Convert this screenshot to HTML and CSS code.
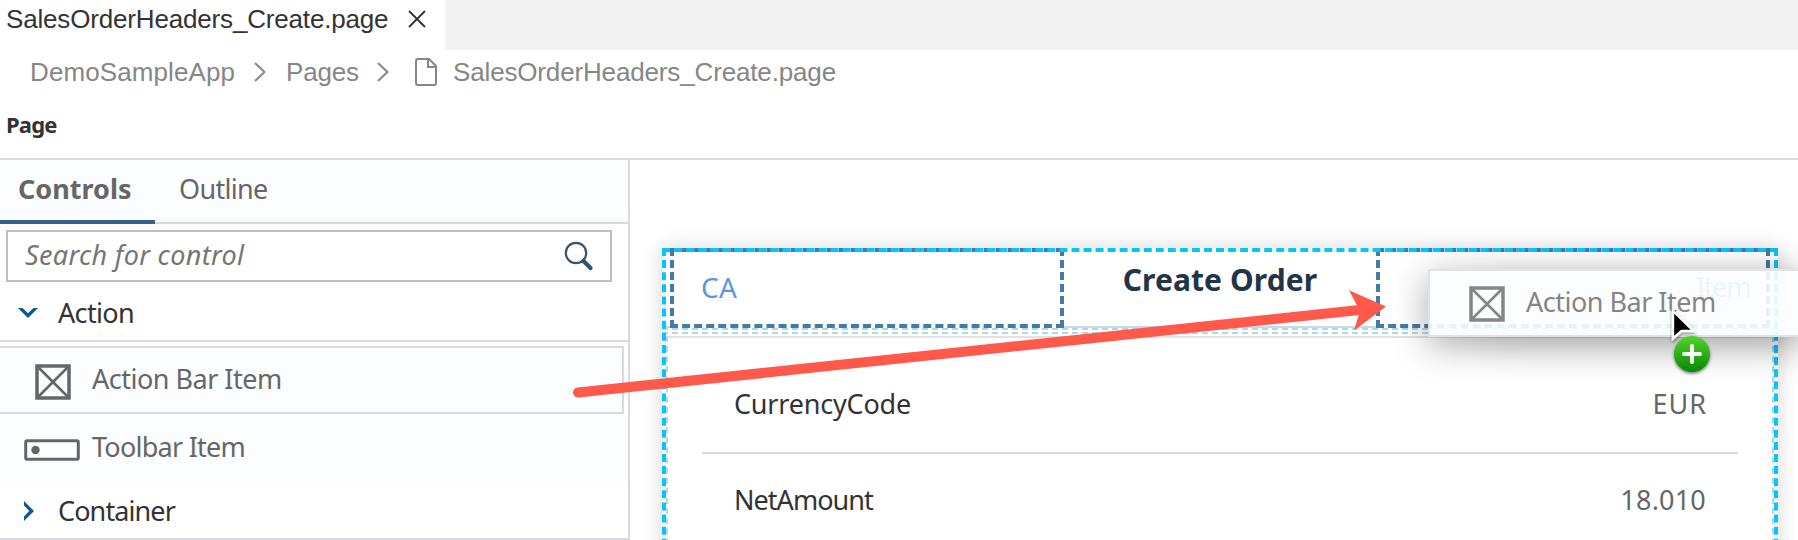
FILE: index.html
```
<!DOCTYPE html>
<html lang="en">
<head>
<meta charset="utf-8">
<title>SalesOrderHeaders_Create.page</title>
<link rel="stylesheet" href="styles.css">
</head>
<body>
<header class="tabs-bar">
  <div class="file-tab">
    <span class="file-name">SalesOrderHeaders_Create.page</span>
    <svg class="close" width="18" height="18" viewBox="0 0 18 18"><path d="M1 1 17 17M17 1 1 17"/></svg>
  </div>
</header>
<nav class="breadcrumb">
  <span class="crumb-app">DemoSampleApp</span>
  <svg class="crumb-sep" width="12" height="20" viewBox="0 0 12 20"><path d="M1 1 10.500 10 1 19"/></svg>
  <span class="crumb-pages">Pages</span>
  <svg class="crumb-sep second" width="12" height="20" viewBox="0 0 12 20"><path d="M1 1 10.500 10 1 19"/></svg>
  <svg class="file-icon" width="22" height="28" viewBox="0 0 22 28"><path d="M3 1H14L21 8V25Q21 27 19 27H3Q1 27 1 25V3Q1 1 3 1ZM13 1V9H21"/></svg>
  <span class="crumb-file">SalesOrderHeaders_Create.page</span>
</nav>
<div class="page-title">Page</div>
<main class="workspace">
  <aside class="panel">
    <div class="panel-tabs">
      <div class="panel-tab active">Controls</div>
      <div class="panel-tab">Outline</div>
    </div>
    <div class="search">
      <span class="placeholder">Search for control</span>
      <svg width="30" height="30" viewBox="0 0 30 30"><circle cx="12" cy="12" r="10.200" fill="none" stroke="#33526f" stroke-width="2.200"/><path d="M19.500 20 26.500 27" stroke="#33526f" stroke-width="4.200" stroke-linecap="round"/></svg>
    </div>
    <div class="group">
      <svg class="chev-down" width="20" height="10" viewBox="0 0 20 10"><path d="M0 0H4.500L10 5.200 15.500 0H20L10 10Z"/></svg>
      <span class="t-action">Action</span>
    </div>
    <div class="item boxed">
      <svg class="box-icon" width="36" height="36" viewBox="0 0 36 36"><path d="M2 2H34V34H2Z" stroke-width="3.500"/><path d="M3 3 33 33M33 3 3 33" stroke-width="2.600"/></svg>
      <span class="t-abi">Action Bar Item</span>
    </div>
    <div class="item toolbar-item">
      <svg class="bar-icon" width="56" height="22" viewBox="0 0 56 22"><rect x="1.700" y="1.700" width="52.600" height="18.600" rx="1.500" stroke-width="3"/><circle cx="11.500" cy="11" r="4.200" class="dot"/></svg>
      <span class="t-tbi">Toolbar Item</span>
    </div>
    <div class="group last">
      <svg class="chev-right" width="10" height="20" viewBox="0 0 10 20"><path d="M0 0V4.500L5.200 10 0 15.500V20L10 10Z"/></svg>
      <span class="t-cont">Container</span>
    </div>
  </aside>
  <section class="canvas">
    <div class="device">
      <div class="action-bar">
        <div class="cell"><span class="t-ca">CA</span></div>
        <div class="bar-title">Create Order</div>
        <div class="cell right"><span class="t-item">Item</span></div>
      </div>
      <div class="bar-outline"></div>
      <div class="content">
        <div class="row"><span class="t-cc">CurrencyCode</span><span class="value t-eur">EUR</span></div>
        <div class="row"><span class="t-net">NetAmount</span><span class="value t-num">18.010</span></div>
      </div>
      <div class="selection"></div>
    </div>
  </section>
</main>
<div class="ghost">
  <svg class="box-icon" width="36" height="36" viewBox="0 0 36 36"><path d="M2 2H34V34H2Z" stroke-width="3.500"/><path d="M3 3 33 33M33 3 3 33" stroke-width="2.600"/></svg>
  <span class="t-abi">Action Bar Item</span>
</div>
<svg class="overlay" width="1798" height="540" viewBox="0 0 1798 540">
  <defs>
    <linearGradient id="green" x1="0" y1="0" x2="0" y2="1"><stop offset="0" stop-color="#55d32c"/><stop offset="1" stop-color="#078805"/></linearGradient>
    <filter id="soft" x="-50%" y="-50%" width="200%" height="200%"><feDropShadow dx="0" dy="1.500" stdDeviation="1.500" flood-opacity=".55"/></filter>
  </defs>
  <path d="M578 392.500 1364 309.500" stroke="#ff594c" stroke-width="10" stroke-linecap="round"/>
  <path d="M1349 290.300 1386 306.500 1354 330.500 1360 311Z" fill="#ff594c"/>
  <path d="M1349 290.300 1360 305V314L1372 306Z" fill="#ff594c"/>
  <path d="M1673 311V338.500L1681.500 331H1693.500Z" fill="#000" stroke="#fff" stroke-width="2.400" filter="url(#soft)"/>
  <circle cx="1692" cy="354" r="18" fill="url(#green)" filter="url(#soft)"/>
  <path d="M1684 354H1700M1692 346V362" stroke="#fff" stroke-width="4" stroke-linecap="round"/>
</svg>
</body>
</html>
```
FILE: styles.css
```
* { box-sizing: border-box; }
body {
  margin: 0;
  width: 1798px;
  height: 540px;
  overflow: hidden;
  position: relative;
  display: flex;
  flex-direction: column;
  background: #fff;
  color: #333;
  font: 27px/36px "Noto Sans", "Open Sans", sans-serif;
  white-space: nowrap;
}
svg { display: block; flex: none; }

.tabs-bar { height: 50px; flex: none; background: #f2f2f2; display: flex; }
.file-tab { width: 445px; background: #fff; display: flex; align-items: flex-start; padding-left: 6px; }
.file-name { width: 402px; font: 26px/38px "Liberation Sans", Arial, sans-serif; letter-spacing: -.17px; }
.close { margin-top: 10px; fill: none; stroke: #333; stroke-width: 1.8; }

.breadcrumb {
  height: 44px;
  flex: none;
  display: flex;
  align-items: center;
  padding-left: 30px;
  color: #868686;
  font: 26px/44px "Liberation Sans", Arial, sans-serif;
}
.crumb-app { width: 224px; letter-spacing: .1px; }
.crumb-sep { fill: none; stroke: #868686; stroke-width: 2; }
.crumb-pages { width: 90px; margin-left: 20px; letter-spacing: -.18px; }
.crumb-sep.second { margin-left: 1px; }
.file-icon { margin-left: 26px; fill: none; stroke: #868686; stroke-width: 2; }
.crumb-file { margin-left: 16px; letter-spacing: -.15px; }

.page-title {
  height: 66px;
  flex: none;
  padding: 1px 0 4px 6px;
  border-bottom: 2px solid #dadade;
  font-size: 22px;
  font-weight: 700;
  line-height: 59px;
  letter-spacing: -.8px;
}

.workspace { flex: 1; display: flex; min-height: 0; }
.panel { width: 630px; border-right: 2px solid #dadade; display: flex; flex-direction: column; flex: none; }
.panel-tabs { height: 64px; display: flex; background: #fcfdfe; border-bottom: 2px solid #dadade; color: #666; }
.panel-tab { height: 64px; padding: 11px 0 0 24px; letter-spacing: -.69px; }
.panel-tab.active { width: 155px; padding-left: 18px; font-weight: 700; letter-spacing: 0; border-bottom: 4px solid #346187; }
.search {
  height: 52px;
  margin: 6px 16px 0 6px;
  padding: 0 16px 0 17px;
  border: 2px solid #bfbfbf;
  display: flex;
  align-items: center;
  justify-content: space-between;
}
.placeholder { padding-bottom: 3px; color: #757575; font-style: italic; letter-spacing: .32px; }
.group { height: 60px; display: flex; align-items: center; padding: 3px 0 0 18px; border-bottom: 2px solid #dadade; }
.group path { fill: #0a5a91; }
.chev-down { margin-right: 20px; }
.t-action { letter-spacing: -.65px; }
.item { display: flex; align-items: center; background: #fcfdfe; color: #666; }
.item svg, .ghost svg { fill: none; stroke: currentColor; }
.boxed { height: 68px; margin: 4px 4px 0 0; padding: 0 0 3px 35px; border: 2px solid #dadade; border-left: 0; }
.boxed .box-icon { margin: 6px 21px 0 0; }
.box-icon, .bar-icon { filter: blur(.5px); }
.t-abi { letter-spacing: -.5px; }
.toolbar-item { height: 72px; padding: 0 0 6px 24px; }
.bar-icon { margin: 6px 12px 0 0; }
.item .dot { fill: currentColor; stroke: none; }
.t-tbi { letter-spacing: -.75px; }
.group.last { height: 54px; padding: 0 0 2px 24px; }
.chev-right { margin-right: 24px; }
.t-cont { letter-spacing: -.9px; }

.canvas { flex: 1; padding: 88px 0 0 32px; overflow: hidden; }
.device { position: relative; width: 1116px; height: 420px; background: #fff; box-shadow: 0 0 20px rgba(0, 0, 0, .16); }
.selection { position: absolute; inset: 0; border: 4px dashed #04c5ff; }
.action-bar { height: 80px; display: flex; padding: 0 8px; background: linear-gradient(#c9d9ea, #c9d9ea) 0 78px / 100% 2px no-repeat; }
.cell { width: 394px; border: 4px dashed #447aa9; background: #fff; color: #5899dd; display: flex; padding: 17px 0 0 27px; }
.cell.right { justify-content: flex-end; padding: 17px 16px 0 0; }
.t-ca { font-size: 28px; letter-spacing: .3px; }
.t-item { letter-spacing: -1.4px; }
.bar-title { flex: 1; padding-top: 14px; text-align: center; color: #223548; font-size: 30px; font-weight: 700; letter-spacing: .1px; }
.bar-outline { height: 6px; border-top: 2px dashed #add8e6; border-bottom: 2px dashed #add8e6; }
.content { height: 340px; margin: 2px 4px 0; border: 2px dashed #add8e6; border-top: 2px solid #e2e2e2; border-bottom: 0; padding: 15px 34px 0; }
.row { height: 101px; display: flex; justify-content: space-between; padding: 33px 32px 0 32px; border-bottom: 2px solid #d9d9d9; }
.row + .row { height: 90px; padding-top: 28px; }
.value { color: #666; }
.t-cc { letter-spacing: -.2px; }
.t-eur { letter-spacing: 1px; margin-right: -1px; }
.t-net { letter-spacing: -.96px; }
.t-num { letter-spacing: .2px; }

.ghost {
  position: absolute;
  left: 1428px;
  top: 269px;
  width: 370px;
  height: 68px;
  padding: 0 0 3px 40px;
  display: flex;
  align-items: center;
  border: 2px solid #e1e3e6;
  border-right: 0;
  background: rgba(252, 253, 254, .9);
  color: #858585;
  box-shadow: 0 8px 36px rgba(0, 0, 0, .34), 60px 8px 36px rgba(0, 0, 0, .08);
}
.ghost .box-icon { margin: 5px 21px 0 -1px; }
.overlay { position: absolute; left: 0; top: 0; }
```
